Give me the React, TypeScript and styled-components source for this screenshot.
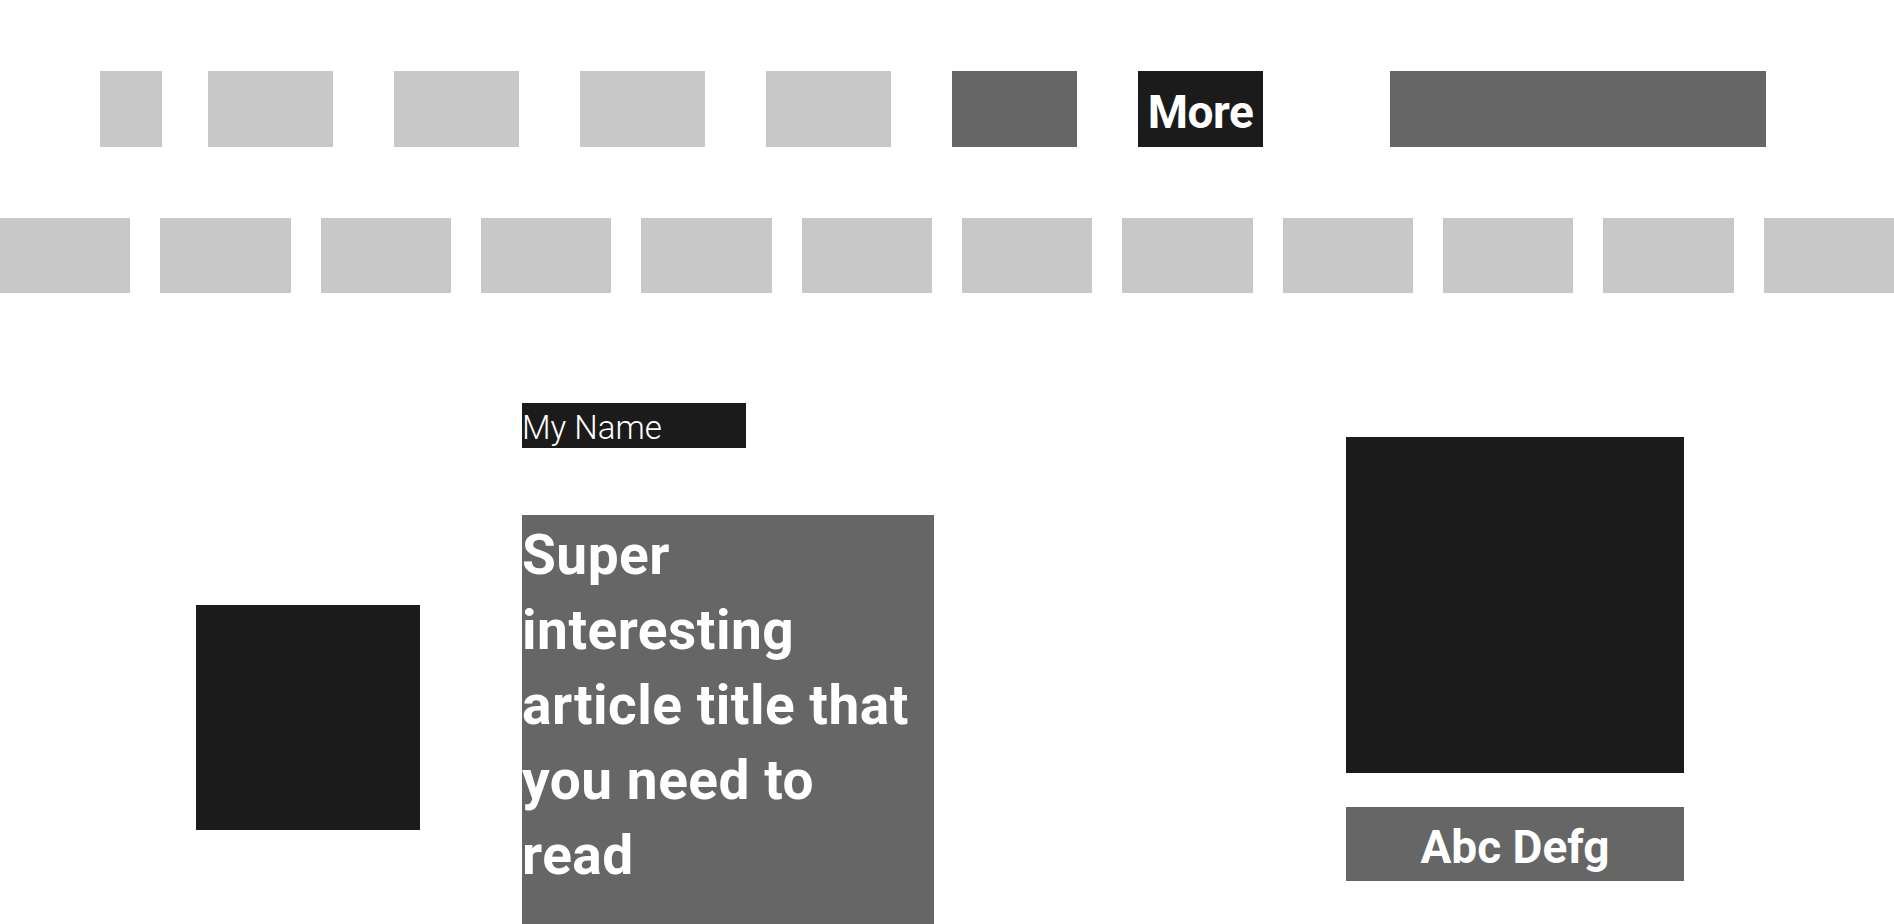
import React from "react";
import styled, { createGlobalStyle } from "styled-components";

const GlobalStyle = createGlobalStyle`
  html, body {
    margin: 0;
    padding: 0;
    background: #ffffff;
    overflow-x: hidden;
  }
  body {
    font-family: Roboto, "Open Sans", "DejaVu Sans", sans-serif;
  }
`;

const LIGHT = "#c8c8c8";
const MID = "#666666";
const DARK = "#1b1b1b";

const Page = styled.div`
  padding-top: 71px;
  width: 1894px;
`;

const Header = styled.header`
  display: flex;
  align-items: stretch;
  height: 76px;
  padding-left: 100px;
`;

const Logo = styled.div`
  width: 62px;
  background: ${LIGHT};
`;

const Nav = styled.nav`
  display: flex;
  gap: 61px;
  margin-left: 46px;
`;

const NavItem = styled.div<{ $tone: "light" | "mid" | "dark" }>`
  width: 125px;
  box-sizing: border-box;
  padding-top: 5px;
  display: flex;
  align-items: center;
  justify-content: center;
  background: ${(p) => (p.$tone === "light" ? LIGHT : p.$tone === "mid" ? MID : DARK)};
  color: #ffffff;
  font-size: 46px;
  font-weight: 700;
  letter-spacing: -0.5px;
`;

const Search = styled.div`
  width: 376px;
  margin-left: 127px;
  background: ${MID};
`;

const Categories = styled.div`
  display: flex;
  gap: 30px;
  margin-top: 71px;
  height: 75px;
`;

const Category = styled.div`
  flex: 1;
  background: ${LIGHT};
`;

const Main = styled.main`
  display: flex;
  align-items: flex-start;
  margin-top: 110px;
  padding-left: 196px;
`;

const Avatar = styled.div`
  width: 224px;
  height: 225px;
  margin-top: 202px;
  background: ${DARK};
`;

const Article = styled.article`
  display: flex;
  flex-direction: column;
  width: 412px;
  margin-left: 102px;
`;

const Author = styled.div`
  width: 224px;
  height: 45px;
  box-sizing: border-box;
  padding-top: 3px;
  display: flex;
  align-items: center;
  background: ${DARK};
  color: #ffffff;
  font-size: 33px;
  font-weight: 300;
`;

const Title = styled.h1`
  margin: 67px 0 0;
  padding: 3px 0 60px;
  background: ${MID};
  color: #ffffff;
  font-size: 55px;
  line-height: 75px;
  font-weight: 700;
  letter-spacing: 0.5px;
`;

const Aside = styled.aside`
  display: flex;
  flex-direction: column;
  gap: 34px;
  width: 338px;
  margin-left: 412px;
  margin-top: 34px;
`;

const Picture = styled.div`
  height: 336px;
  background: ${DARK};
`;

const Caption = styled.div`
  height: 74px;
  box-sizing: border-box;
  padding-top: 6px;
  display: flex;
  align-items: center;
  justify-content: center;
  background: ${MID};
  color: #ffffff;
  font-size: 46px;
  font-weight: 700;
`;

const navTones: ("light" | "mid" | "dark")[] = ["light", "light", "light", "light", "mid", "dark"];

const App: React.FC = () => {
  return (
    <Page>
      <GlobalStyle />
      <Header>
        <Logo />
        <Nav>
          {navTones.map((tone, i) => (
            <NavItem key={i} $tone={tone}>
              {tone === "dark" ? "More" : null}
            </NavItem>
          ))}
        </Nav>
        <Search />
      </Header>
      <Categories>
        {Array.from({ length: 12 }).map((_, i) => (
          <Category key={i} />
        ))}
      </Categories>
      <Main>
        <Avatar />
        <Article>
          <Author>My Name</Author>
          <Title>Super interesting article title that you need to read</Title>
        </Article>
        <Aside>
          <Picture />
          <Caption>Abc Defg</Caption>
        </Aside>
      </Main>
    </Page>
  );
};

export default App;
